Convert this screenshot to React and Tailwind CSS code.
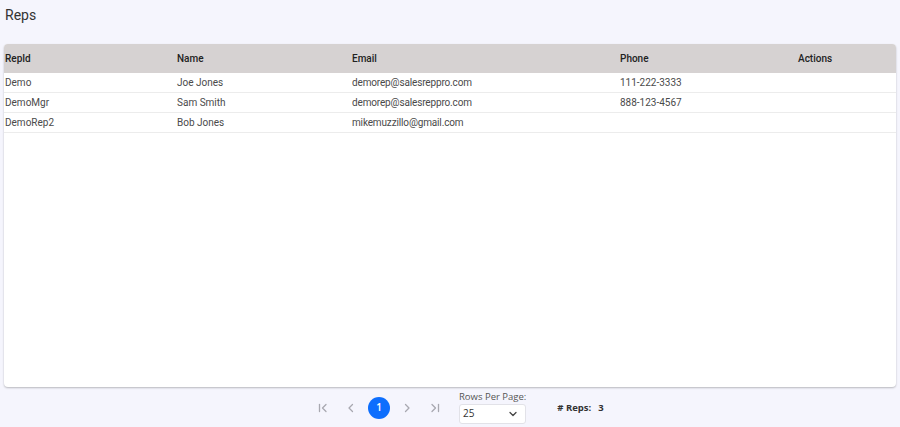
import React from "react";

const rows = [
  { id: "Demo", name: "Joe Jones", email: "demorep@salesreppro.com", phone: "111-222-3333" },
  { id: "DemoMgr", name: "Sam Smith", email: "demorep@salesreppro.com", phone: "888-123-4567" },
  { id: "DemoRep2", name: "Bob Jones", email: "mikemuzzillo@gmail.com", phone: "" },
];

function Chev({ dir = "left", bar = false }) {
  const left = dir === "left";
  return (
    <svg width="14" height="14" viewBox="0 0 14 14" fill="none" stroke="#a8a8b0" strokeWidth="1.3" strokeLinecap="round" strokeLinejoin="round">
      {left ? (
        <>
          <path d={bar ? "M10 3.5 L6.5 7 L10 10.5" : "M8.5 3.5 L5 7 L8.5 10.5"} />
          {bar && <path d="M3.5 3.5 V10.5" />}
        </>
      ) : (
        <>
          <path d={bar ? "M4 3.5 L7.5 7 L4 10.5" : "M5.5 3.5 L9 7 L5.5 10.5"} />
          {bar && <path d="M10.5 3.5 V10.5" />}
        </>
      )}
    </svg>
  );
}

export default function App() {
  const cols = "grid grid-cols-[173px_175px_268px_178px_1fr]";
  return (
    <div className="min-h-[427px] w-[900px] bg-[#f5f5fd] px-[4px] font-['Roboto',sans-serif]">
      <div className="h-[44px] pt-[7px] pl-[1px] text-[14px] text-[#333] leading-[17px]">Reps</div>
      <div className="h-[343px] w-[892px] rounded-[4px] bg-white shadow-[0_1px_2px_rgba(0,0,0,0.25)] overflow-hidden">
        <div className={`${cols} h-[29px] items-center bg-[#d6d2d2] text-[10px] font-medium text-[#222]`}>
          <div className="pl-[1px]">RepId</div>
          <div>Name</div>
          <div>Email</div>
          <div>Phone</div>
          <div>Actions</div>
        </div>
        {rows.map((r) => (
          <div key={r.id} className={`${cols} h-[20px] items-center border-b-[1.5px] border-[#ececec] text-[10px] text-[#4a4a4a]`}>
            <div className="pl-[1px]">{r.id}</div>
            <div>{r.name}</div>
            <div className="tracking-[-0.15px]">{r.email}</div>
            <div>{r.phone}</div>
            <div></div>
          </div>
        ))}
      </div>
      <div className="flex h-[40px] items-center pl-[305px] font-['Open_Sans',sans-serif]">
        <div className="flex items-center mt-[1px]">
          <div className="flex w-[28px] justify-center"><Chev dir="left" bar /></div>
          <div className="flex w-[28px] justify-center"><Chev dir="left" /></div>
          <div className="mx-[3px] flex h-[22px] w-[22px] items-center justify-center rounded-full bg-[#0d6efd] text-[10px] font-semibold text-white">1</div>
          <div className="flex w-[28px] justify-center"><Chev dir="right" /></div>
          <div className="flex w-[28px] justify-center"><Chev dir="right" bar /></div>
        </div>
        <div className="ml-[10px] flex flex-col">
          <div className="text-[9.5px] leading-[12px] text-[#555]">Rows Per Page:</div>
          <div className="mt-[1px] flex h-[20px] w-[67px] items-center justify-between rounded-[3px] border border-[#e2e2e8] bg-white pl-[3px] pr-[7px] text-[10px] text-[#333]">
            <span>25</span>
            <svg width="10" height="10" viewBox="0 0 10 10" fill="none" stroke="#444" strokeWidth="1.3" strokeLinecap="round" strokeLinejoin="round">
              <path d="M2 3.5 L5 6.5 L8 3.5" />
            </svg>
          </div>
        </div>
        <div className="ml-[31px] mt-[2px] flex text-[9.5px] font-bold text-[#333]">
          <span># Reps:</span>
          <span className="ml-[7px]">3</span>
        </div>
      </div>
    </div>
  );
}
